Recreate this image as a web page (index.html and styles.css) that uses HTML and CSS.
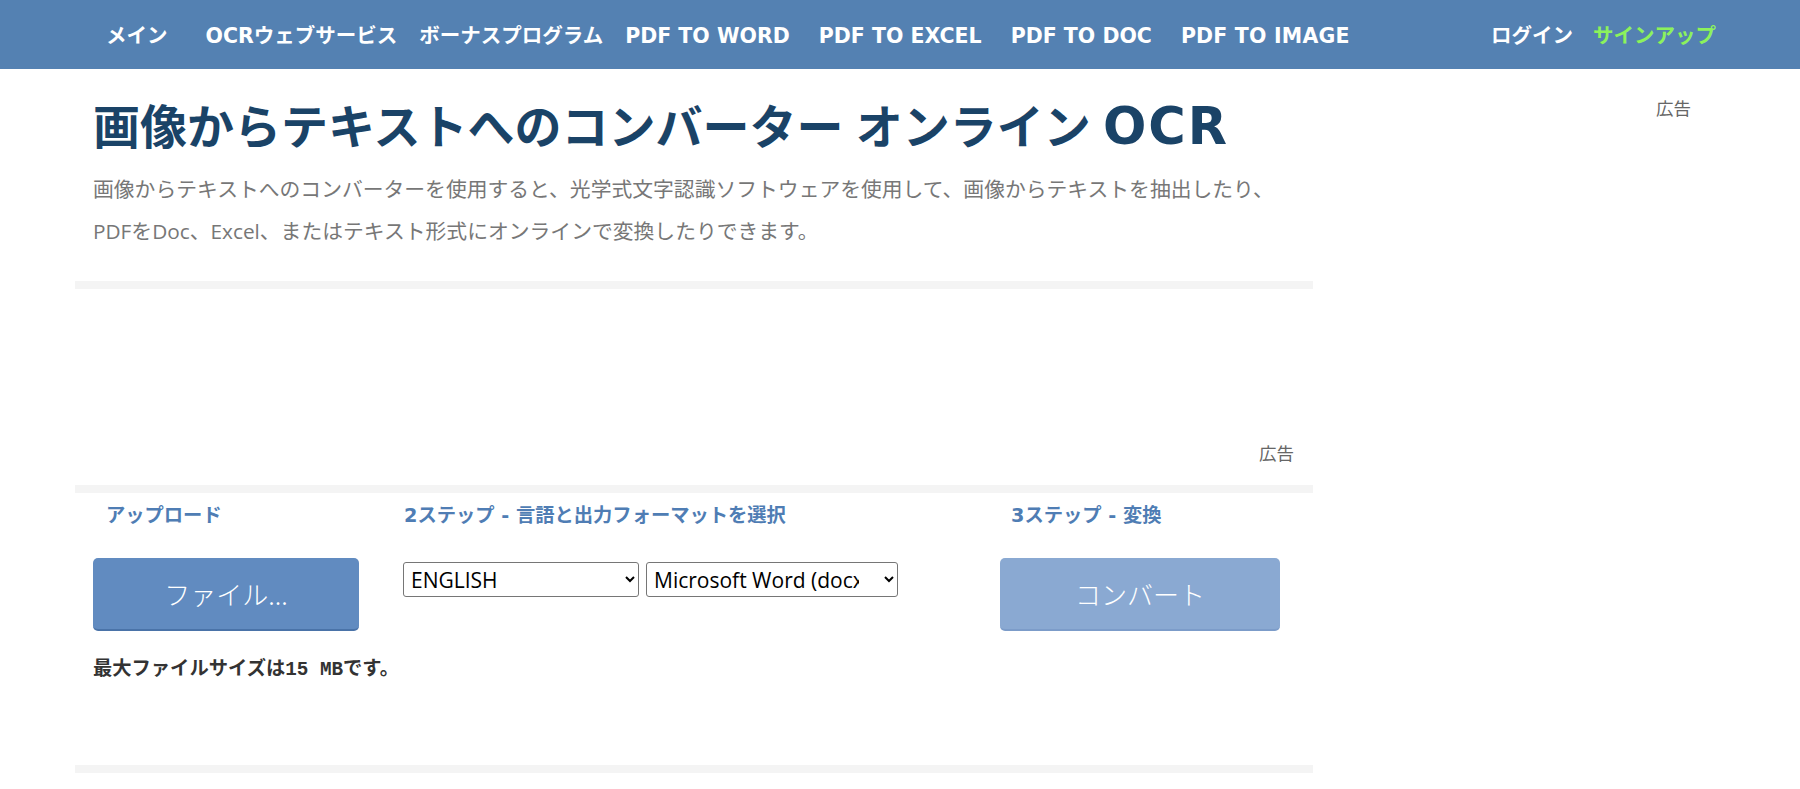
FILE: index.html
```html
<!DOCTYPE html>
<html lang="ja">
<head>
<meta charset="utf-8">
<title>画像からテキストへのコンバーター オンライン OCR</title>
<link rel="stylesheet" href="styles.css">
</head>
<body>
<header class="topbar">
  <nav class="nav">
    <div class="nav-links">
      <a class="nav-link first" href="#">メイン</a>
      <a class="nav-link" href="#">OCRウェブサービス</a>
      <a class="nav-link" href="#">ボーナスプログラム</a>
      <a class="nav-link pdf" href="#">PDF TO WORD</a>
      <a class="nav-link pdf" href="#">PDF TO EXCEL</a>
      <a class="nav-link pdf" href="#">PDF TO DOC</a>
      <a class="nav-link" href="#">PDF TO IMAGE</a>
    </div>
    <div class="nav-auth">
      <a class="nav-link" href="#">ログイン</a>
      <a class="nav-link signup" href="#">サインアップ</a>
    </div>
  </nav>
</header>
<main class="page">
  <section class="main-col">
    <h1 class="title">画像からテキストへのコンバーター オンライン <span class="title-latin">OCR</span></h1>
    <p class="lead">画像からテキストへのコンバーターを使用すると、光学式文字認識ソフトウェアを使用して、画像からテキストを抽出したり、<br>PDFをDoc、Excel、またはテキスト形式にオンラインで変換したりできます。</p>
    <div class="ad-box"><span class="ad-label">広告</span></div>
    <div class="tool">
      <div class="step step-upload">
        <div class="step-title">アップロード</div>
        <button class="btn btn-file" type="button">ファイル...</button>
        <p class="max-size">最大ファイルサイズは<code>15 MB</code>です。</p>
      </div>
      <div class="step step-format">
        <div class="step-title">2ステップ - 言語と出力フォーマットを選択</div>
        <div class="selects">
          <select class="sel sel-lang">
            <option>ENGLISH</option>
            <option>JAPANESE</option>
          </select>
          <select class="sel sel-format">
            <option>Microsoft Word (docx)</option>
            <option>Microsoft Excel (xlsx)</option>
            <option>Text Plain (txt)</option>
          </select>
        </div>
      </div>
      <div class="step step-convert">
        <div class="step-title">3ステップ - 変換</div>
        <button class="btn btn-convert" type="button">コンバート</button>
      </div>
    </div>
  </section>
  <aside class="side-col"><span class="ad-label">広告</span></aside>
</main>
</body>
</html>
```

FILE: styles.css
```css
* { box-sizing: border-box; }

body {
  margin: 0;
  background: #ffffff;
  font-family: "Open Sans", "Noto Sans CJK JP", sans-serif;
}

/* ---------- top navigation ---------- */
.topbar {
  background: #5481b2;
  height: 69px;
}

.nav {
  width: 1650px;
  height: 69px;
  margin: 0 auto;
  padding: 2px 9px 0 31px;
  display: flex;
  align-items: center;
  justify-content: space-between;
}

.nav-links,
.nav-auth {
  display: flex;
  align-items: center;
}

.nav-link {
  color: #ffffff;
  text-decoration: none;
  font-family: "DejaVu Sans", "Noto Sans CJK JP", sans-serif;
  font-weight: bold;
  font-size: 20.5px;
  line-height: 24px;
  margin-right: 22px;
  white-space: nowrap;
}

.nav-link.first { margin-right: 38px; }
.nav-link.pdf { margin-right: 29px; }
.nav-links .nav-link:last-child {
  margin-right: 0;
  letter-spacing: 0.2px;
}

.nav-auth .nav-link {
  margin-right: 0;
  margin-left: 20px;
}

.nav-link.signup { color: #8cf25c; }

/* ---------- page ---------- */
.page {
  width: 1650px;
  margin: 0 auto;
  display: flex;
}

.main-col {
  width: 1238px;
  flex: none;
}

.side-col {
  flex: 1;
  text-align: right;
  padding: 27px 34px 0 0;
}

.title {
  margin: 30px 0 0 18px;
  font-family: "Open Sans", "Noto Sans CJK JP", sans-serif;
  font-size: 47px;
  line-height: 55px;
  font-weight: bold;
  color: #1a4367;
  white-space: nowrap;
}

.title-latin {
  font-family: "DejaVu Sans", sans-serif;
  font-size: 51px;
  letter-spacing: 2px;
}

.lead {
  margin: 14px 0 0 18px;
  font-size: 20.8px;
  line-height: 42px;
  color: #777777;
}

.ad-label {
  font-family: "Open Sans", "Noto Sans CJK JP", sans-serif;
  font-size: 17.5px;
  line-height: 24px;
  color: #666666;
}

.ad-box {
  margin-top: 29px;
  border-top: 8px solid #f4f4f4;
  height: 204px;
  padding: 0 19px 20px 0;
  display: flex;
  align-items: flex-end;
  justify-content: flex-end;
}

/* ---------- tool ---------- */
.tool {
  border-top: 8px solid #f4f4f4;
  border-bottom: 8px solid #f4f4f4;
  padding: 11px 0 0;
  height: 288px;
  display: grid;
  grid-template-columns: 315px 598px 1fr;
  align-items: start;
}

.step {
  display: flex;
  flex-direction: column;
  align-items: flex-start;
}

.step-title {
  font-family: "DejaVu Sans", "Noto Sans CJK JP", sans-serif;
  font-weight: bold;
  font-size: 19.3px;
  line-height: 24px;
  color: #4f7db4;
  white-space: nowrap;
}

.step-upload .step-title { margin-left: 31px; }
.step-format .step-title { margin-left: 14px; }
.step-convert .step-title { margin-left: 23px; }

.btn {
  border: none;
  border-radius: 5px;
  color: #ffffff;
  font-family: "Noto Sans CJK JP", sans-serif;
  font-size: 26px;
  font-weight: 300;
  height: 73px;
  margin-top: 30px;
  cursor: pointer;
}

.btn-file {
  width: 266px;
  margin-left: 18px;
  background: #618bc0;
  border-bottom: 2px solid #4a73a8;
}

.btn-convert {
  width: 280px;
  margin-left: 12px;
  background: #8aa9d2;
  border-bottom: 2px solid #7c9cc9;
}

.selects {
  display: flex;
  gap: 7px;
  margin: 34px 0 0 13px;
}

.sel {
  height: 35px;
  font-family: "Open Sans", sans-serif;
  font-size: 21px;
  color: #000000;
  background: #ffffff;
  border: 1px solid #767676;
  border-radius: 3px;
  padding: 0 6px 0 3px;
}

.sel-lang { width: 236px; }
.sel-format {
  width: 252px;
  padding-right: 22px;
}

.max-size {
  margin: 26px 0 0 18px;
  font-family: "DejaVu Sans", "Noto Sans CJK JP", sans-serif;
  font-weight: bold;
  font-size: 19.3px;
  line-height: 24px;
  color: #333333;
  white-space: nowrap;
}

.max-size code {
  font-family: "Liberation Mono", monospace;
  font-size: 19.3px;
  font-weight: bold;
}
```
